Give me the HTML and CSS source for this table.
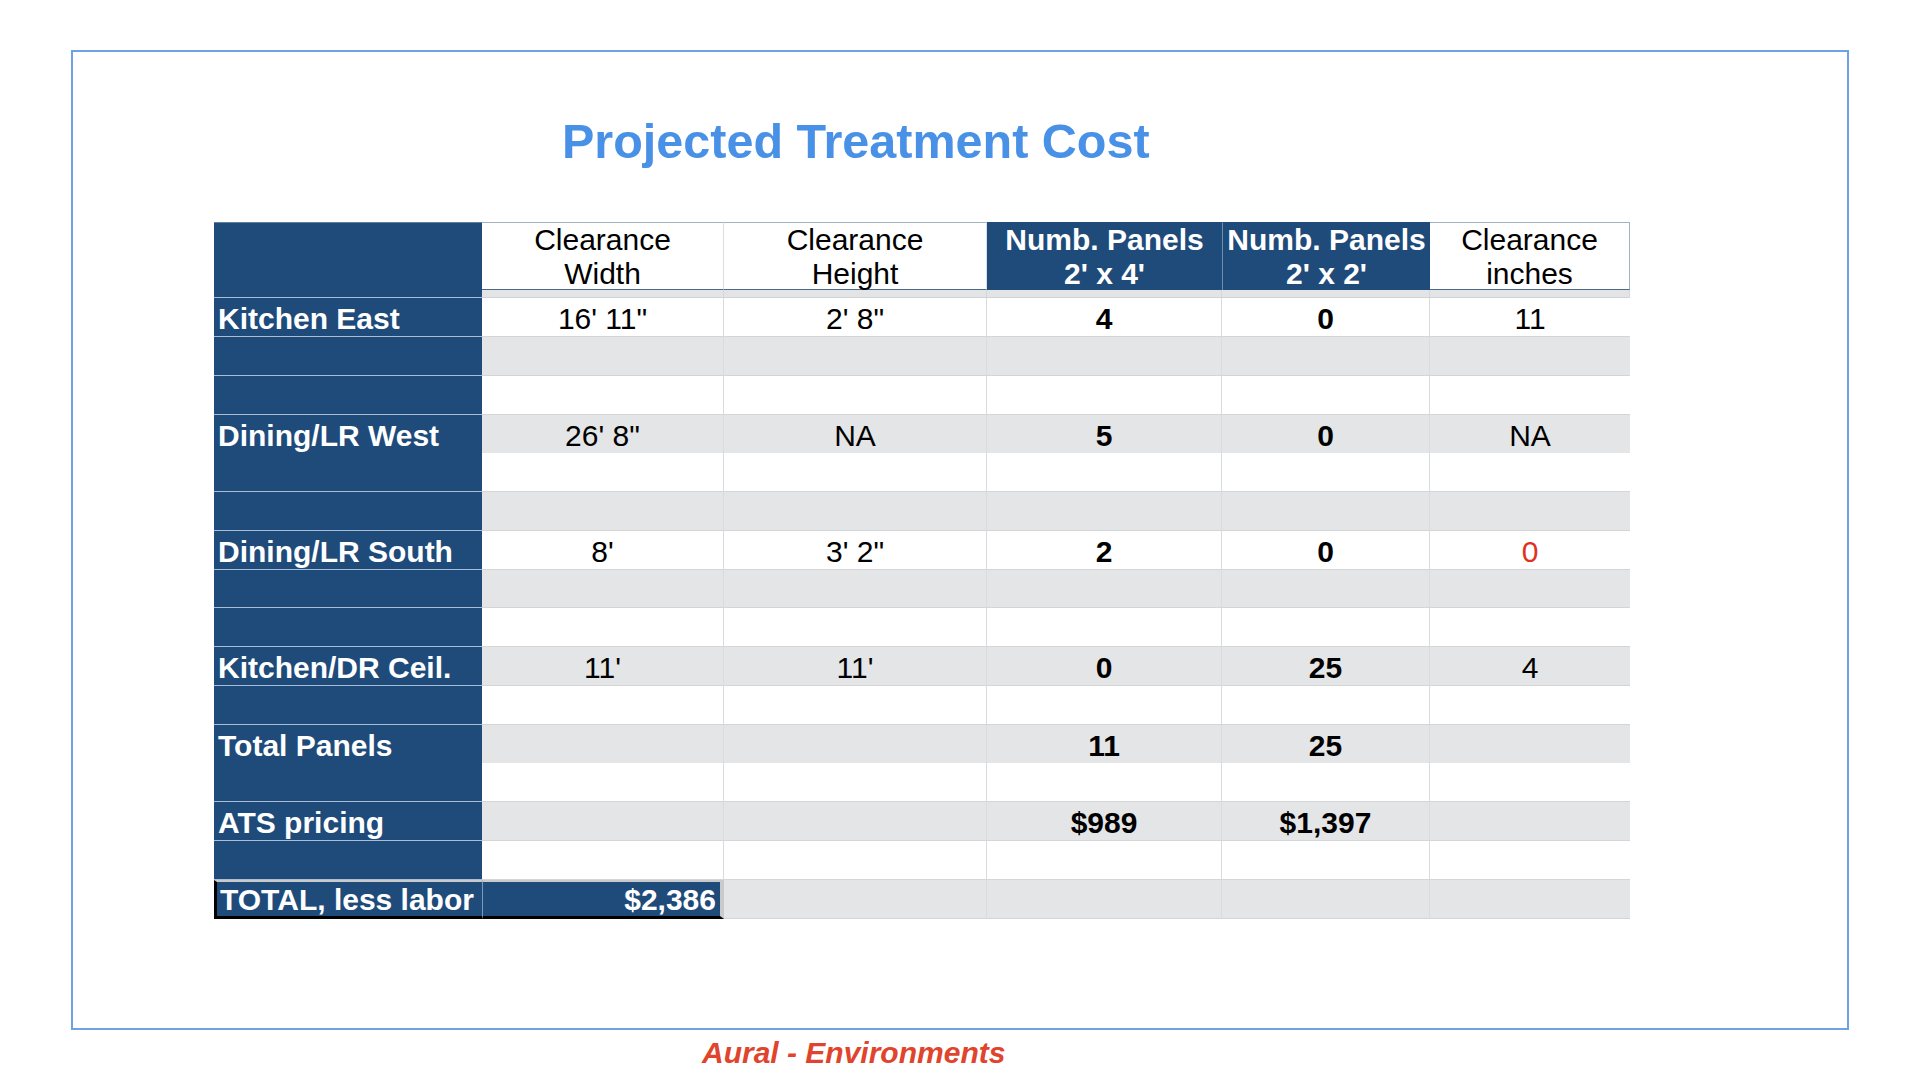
FILE: index.html
```html
<!DOCTYPE html>
<html>
<head>
<meta charset="utf-8">
<title>Projected Treatment Cost</title>
<link rel="stylesheet" href="styles.css">
</head>
<body>
<div class="frame">
  <h1 class="title">Projected Treatment Cost</h1>
  <div class="sheet">
    <div class="head">
      <div class="hc lab-h"></div>
      <div class="hc light">Clearance<br>Width</div>
      <div class="hc light">Clearance<br>Height</div>
      <div class="hc dark">Numb. Panels<br>2' x 4'</div>
      <div class="hc dark sep">Numb. Panels<br>2' x 2'</div>
      <div class="hc light last">Clearance<br>inches</div>
      <div class="strip"></div>
      <div class="strip"></div>
      <div class="strip"></div>
      <div class="strip"></div>
      <div class="strip last"></div>
    </div>

    <div class="row"><div class="lab">Kitchen East</div><div class="c">16' 11"</div><div class="c">2' 8"</div><div class="c b">4</div><div class="c b">0</div><div class="c">11</div></div>
    <div class="row alt"><div class="lab"></div><div class="c"></div><div class="c"></div><div class="c"></div><div class="c"></div><div class="c"></div></div>
    <div class="row"><div class="lab"></div><div class="c"></div><div class="c"></div><div class="c"></div><div class="c"></div><div class="c"></div></div>
    <div class="row alt"><div class="lab">Dining/LR West</div><div class="c">26' 8"</div><div class="c">NA</div><div class="c b">5</div><div class="c b">0</div><div class="c">NA</div></div>
    <div class="row"><div class="lab"></div><div class="c"></div><div class="c"></div><div class="c"></div><div class="c"></div><div class="c"></div></div>
    <div class="row alt"><div class="lab"></div><div class="c"></div><div class="c"></div><div class="c"></div><div class="c"></div><div class="c"></div></div>
    <div class="row"><div class="lab">Dining/LR South</div><div class="c">8'</div><div class="c">3' 2"</div><div class="c b">2</div><div class="c b">0</div><div class="c red">0</div></div>
    <div class="row alt"><div class="lab"></div><div class="c"></div><div class="c"></div><div class="c"></div><div class="c"></div><div class="c"></div></div>
    <div class="row"><div class="lab"></div><div class="c"></div><div class="c"></div><div class="c"></div><div class="c"></div><div class="c"></div></div>
    <div class="row alt"><div class="lab">Kitchen/DR Ceil.</div><div class="c">11'</div><div class="c">11'</div><div class="c b">0</div><div class="c b">25</div><div class="c">4</div></div>
    <div class="row"><div class="lab"></div><div class="c"></div><div class="c"></div><div class="c"></div><div class="c"></div><div class="c"></div></div>
    <div class="row alt"><div class="lab">Total Panels</div><div class="c"></div><div class="c"></div><div class="c b">11</div><div class="c b">25</div><div class="c"></div></div>
    <div class="row"><div class="lab"></div><div class="c"></div><div class="c"></div><div class="c"></div><div class="c"></div><div class="c"></div></div>
    <div class="row alt"><div class="lab">ATS pricing</div><div class="c"></div><div class="c"></div><div class="c b">$989</div><div class="c b">$1,397</div><div class="c"></div></div>
    <div class="row"><div class="lab"></div><div class="c"></div><div class="c"></div><div class="c"></div><div class="c"></div><div class="c"></div></div>
    <div class="row alt total"><div class="lab tl">TOTAL, less labor</div><div class="c tv">$2,386</div><div class="c"></div><div class="c"></div><div class="c"></div><div class="c"></div></div>
  </div>
</div>
<div class="footer">Aural - Environments</div>
</body>
</html>
```

FILE: styles.css
```css
html, body {
  margin: 0;
  padding: 0;
  background: #ffffff;
}

body {
  padding-top: 50px;
  padding-left: 71px;
  font-family: "Liberation Sans", Arial, Helvetica, sans-serif;
  color: #000;
}

.frame {
  box-sizing: border-box;
  width: 1778px;
  height: 980px;
  border: 2px solid #6ea3e2;
}

.title {
  margin: 65px 0 0 0;
  padding-left: 489px;
  font-size: 48.5px;
  line-height: 48px;
  font-weight: bold;
  color: #4891e6;
}

.sheet {
  margin-top: 57px;
  margin-left: 141px;
  width: 1416px;
  display: flex;
  flex-direction: column;
  font-size: 30px;
}

.head {
  display: grid;
  grid-template-columns: 268px 242px 263px 235px 208px 200px;
  grid-template-rows: 68px 8px;
}

.hc {
  box-sizing: border-box;
  text-align: center;
  line-height: 34px;
  border-top: 1px solid #a3b3c4;
  white-space: nowrap;
}

.lab-h {
  grid-row: 1 / 3;
  background: #1f4b7b;
  border-top-color: #5f7fa3;
  border-bottom: 1px solid #a9bed6;
}

.hc.light {
  background: #ffffff;
  border-right: 1px solid #dcdde0;
  border-bottom: 1px solid #4b6888;
}

.hc.last {
  border-right: 1px solid #a3b3c4;
}

.hc.dark {
  background: #1f4b7b;
  color: #ffffff;
  font-weight: bold;
  border-top-color: #1f4b7b;
}

.hc.sep {
  border-left: 1px solid #6d8db0;
}

.strip {
  background: #e3e4e6;
  border-right: 1px solid #d6d7da;
  border-bottom: 1px solid #d0d2d5;
}

.row {
  display: grid;
  grid-template-columns: 268px 242px 263px 235px 208px 200px;
  height: 39px;
  background: #ffffff;
}

.row:nth-child(4n+1) {
  height: 38px;
}

.row.alt {
  background: #e4e5e7;
}

.lab {
  box-sizing: border-box;
  background: #1f4b7b;
  color: #ffffff;
  font-weight: bold;
  padding: 3px 0 0 4px;
  line-height: 35px;
  white-space: nowrap;
  border-bottom: 1px solid #a9bed6;
}

.c {
  box-sizing: border-box;
  text-align: center;
  padding-top: 3px;
  line-height: 35px;
  white-space: nowrap;
  border-right: 1px solid #dadbdd;
  border-bottom: 1px solid #d3d5d8;
}

.c:last-child {
  border-right: none;
}

.b {
  font-weight: bold;
}

.red {
  color: #e0301e;
}

.total .tl {
  border-left: 3px solid #000000;
  border-bottom: 3px solid #000000;
  border-top: 2px solid #c9cacc;
  padding-left: 3px;
  line-height: 33px;
  padding-top: 1px;
}

.total .tv {
  background: #1f4b7b;
  color: #ffffff;
  font-weight: bold;
  text-align: right;
  padding-right: 4px;
  border-top: 2px solid #c9cacc;
  border-right: 4px solid #c9cacc;
  border-bottom: 3px solid #000000;
  border-left: 1px solid #7d98b8;
  line-height: 33px;
  padding-top: 1px;
}

.footer {
  margin-top: 8px;
  margin-left: 631px;
  font-size: 30px;
  line-height: 30px;
  font-weight: bold;
  font-style: italic;
  color: #e0442c;
}
```
